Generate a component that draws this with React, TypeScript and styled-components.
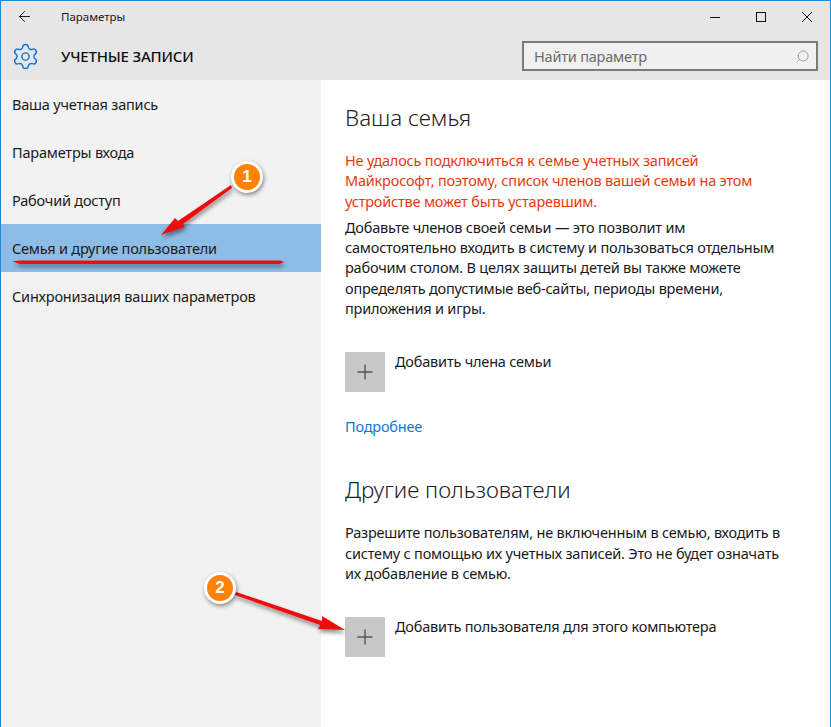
import React from 'react'
import styled, { createGlobalStyle } from 'styled-components'
import { ArrowLeft, Plus, Search, Settings } from 'lucide-react'

const GlobalStyle = createGlobalStyle`
  html, body {
    margin: 0;
    padding: 0;
    background: #ffffff;
  }
`

const Window = styled.div`
  position: relative;
  width: 831px;
  height: 727px;
  box-sizing: border-box;
  overflow: hidden;
  display: flex;
  flex-direction: column;
  border: 1px solid #1c8ad6;
  border-bottom: 0;
  font-family: 'Noto Sans', 'Open Sans', sans-serif;
  font-size: 14.5px;
  letter-spacing: -0.2px;
  color: #1a1a1a;
`

const Header = styled.header`
  background: #e6e6e6;
  height: 79px;
  flex: none;
  display: flex;
  flex-direction: column;
`

const TitleBar = styled.div`
  height: 31px;
  display: flex;
  align-items: center;
`

const BackButton = styled.div`
  width: 60px;
  padding-left: 15px;
  box-sizing: border-box;
  display: flex;
  align-items: center;
`

const WindowTitle = styled.span`
  font-size: 11.5px;
  letter-spacing: 0;
  flex: 1;
`

const WindowControls = styled.div`
  display: flex;
  align-items: center;
`

const ControlButton = styled.div`
  width: 46px;
  height: 30px;
  display: flex;
  align-items: center;
  justify-content: center;
  svg {
    display: block;
  }
`

const HeaderRow = styled.div`
  flex: 1;
  display: flex;
  align-items: center;
  padding: 0 12px 0 10px;
`

const GearWrap = styled.div`
  width: 50px;
  color: #0f78d4;
  display: flex;
`

const SectionTitle = styled.h1`
  flex: 1;
  margin: 0;
  font-size: 15px;
  font-weight: 500;
  letter-spacing: -0.2px;
  color: #111111;
`

const SearchBox = styled.div`
  width: 296px;
  height: 30px;
  box-sizing: border-box;
  border: 2px solid #7a7a7a;
  background: #f0f0f0;
  display: flex;
  align-items: center;
  justify-content: space-between;
  padding: 0 6px 0 10px;
  color: #6b6b6b;
  svg {
    transform: scaleX(-1);
    color: #8a8a8a;
  }
`

const Body = styled.div`
  flex: 1;
  display: flex;
  min-height: 0;
`

const Sidebar = styled.nav`
  width: 320px;
  flex: none;
  background: #f2f2f2;
`

const NavItem = styled.div<{ $active?: boolean }>`
  height: 48px;
  display: flex;
  align-items: center;
  padding-left: 11px;
  background: ${(p) => (p.$active ? '#8dbde6' : 'transparent')};
`

const Main = styled.main`
  flex: 1;
  padding: 21px 0 0 24px;
  background: #ffffff;
`

const Heading = styled.h2`
  margin: 0;
  font-size: 22.4px;
  line-height: 34px;
  font-weight: 300;
  letter-spacing: 0;
  color: #222222;
`

const Paragraph = styled.p<{ $error?: boolean }>`
  margin: 0;
  line-height: 20.3px;
  width: 440px;
  color: ${(p) => (p.$error ? '#e63a0c' : '#1a1a1a')};
`

const AddRow = styled.div`
  display: flex;
  gap: 10px;
`

const AddTile = styled.div`
  width: 40px;
  height: 40px;
  background: #c8c8c8;
  color: #555555;
  display: flex;
  align-items: center;
  justify-content: center;
`

const AddLabel = styled.span`
  line-height: 18px;
`

const MoreLink = styled.a`
  display: block;
  color: #0f78d4;
  line-height: 20px;
`

const Spacer = styled.div<{ $h: number }>`
  height: ${(p) => p.$h}px;
`

const Overlay = styled.svg`
  position: absolute;
  left: -1px;
  top: -1px;
  width: 831px;
  height: 727px;
  pointer-events: none;
`

const Badge = styled.div<{ $x: number; $y: number }>`
  position: absolute;
  left: ${(p) => p.$x - 1}px;
  top: ${(p) => p.$y - 1}px;
  width: 32px;
  height: 32px;
  box-sizing: border-box;
  border: 3px solid #ffffff;
  border-radius: 50%;
  background: #ff8205;
  color: #ffffff;
  font-family: 'Liberation Sans', sans-serif;
  font-weight: 700;
  font-size: 17px;
  letter-spacing: 0;
  display: flex;
  align-items: center;
  justify-content: center;
  box-shadow: 1px 2px 4px rgba(0, 0, 0, 0.45);
`

const navItems = [
  'Ваша учетная запись',
  'Параметры входа',
  'Рабочий доступ',
  'Семья и другие пользователи',
  'Синхронизация ваших параметров',
]

const AddButton: React.FC<{ label: string }> = ({ label }) => (
  <AddRow>
    <AddTile>
      <Plus size={24} strokeWidth={1.4} />
    </AddTile>
    <AddLabel>{label}</AddLabel>
  </AddRow>
)

export default function App() {
  return (
    <Window>
      <GlobalStyle />
      <Header>
        <TitleBar>
          <BackButton>
            <ArrowLeft size={17} strokeWidth={1.4} />
          </BackButton>
          <WindowTitle>Параметры</WindowTitle>
          <WindowControls>
            <ControlButton>
              <svg width="10" height="10" viewBox="0 0 10 10">
                <path d="M0 5.5h10" stroke="#111" />
              </svg>
            </ControlButton>
            <ControlButton>
              <svg width="10" height="10" viewBox="0 0 10 10">
                <rect x="0.5" y="0.5" width="9" height="9" fill="none" stroke="#111" />
              </svg>
            </ControlButton>
            <ControlButton>
              <svg width="10" height="10" viewBox="0 0 10 10">
                <path d="M0 0l10 10M10 0L0 10" stroke="#111" />
              </svg>
            </ControlButton>
          </WindowControls>
        </TitleBar>
        <HeaderRow>
          <GearWrap>
            <Settings size={29} strokeWidth={1.2} />
          </GearWrap>
          <SectionTitle>УЧЕТНЫЕ ЗАПИСИ</SectionTitle>
          <SearchBox>
            <span>Найти параметр</span>
            <Search size={15} strokeWidth={1.2} />
          </SearchBox>
        </HeaderRow>
      </Header>
      <Body>
        <Sidebar>
          {navItems.map((item, i) => (
            <NavItem key={item} $active={i === 3}>
              {item}
            </NavItem>
          ))}
        </Sidebar>
        <Main>
          <Heading>Ваша семья</Heading>
          <Spacer $h={15} />
          <Paragraph $error>
            Не удалось подключиться к семье учетных записей Майкрософт, поэтому, список членов вашей семьи на этом устройстве может быть устаревшим.
          </Paragraph>
          <Spacer $h={6} />
          <Paragraph>
            Добавьте членов своей семьи — это позволит им самостоятельно входить в систему и пользоваться отдельным рабочим столом. В целях защиты детей вы также можете определять допустимые веб-сайты, периоды времени, приложения и игры.
          </Paragraph>
          <Spacer $h={34} />
          <AddButton label="Добавить члена семьи" />
          <Spacer $h={24} />
          <MoreLink>Подробнее</MoreLink>
          <Spacer $h={37} />
          <Heading>Другие пользователи</Heading>
          <Spacer $h={15} />
          <Paragraph>
            Разрешите пользователям, не включенным в семью, входить в систему с помощью их учетных записей. Это не будет означать их добавление в семью.
          </Paragraph>
          <Spacer $h={34} />
          <AddButton label="Добавить пользователя для этого компьютера" />
        </Main>
      </Body>
      <Overlay viewBox="0 0 831 727">
        <defs>
          <filter id="arrowShadow" x="-20%" y="-100%" width="140%" height="400%">
            <feDropShadow dx="1" dy="3" stdDeviation="2" floodColor="#000" floodOpacity="0.45" />
          </filter>
        </defs>
        <g fill="#ee0f0f" filter="url(#arrowShadow)">
          <polygon points="231,185 232,188 183,224 185,227 161,235 175,218 178,221" />
          <polygon points="12,261.5 20,260.5 280,260.5 284,262 280,264 20,264" />
          <polygon points="236,592 322,621 322,616 345,630 318,629 320,625 235,595" />
        </g>
      </Overlay>
      <Badge $x={231} $y={161}>1</Badge>
      <Badge $x={204} $y={572}>2</Badge>
    </Window>
  )
}
